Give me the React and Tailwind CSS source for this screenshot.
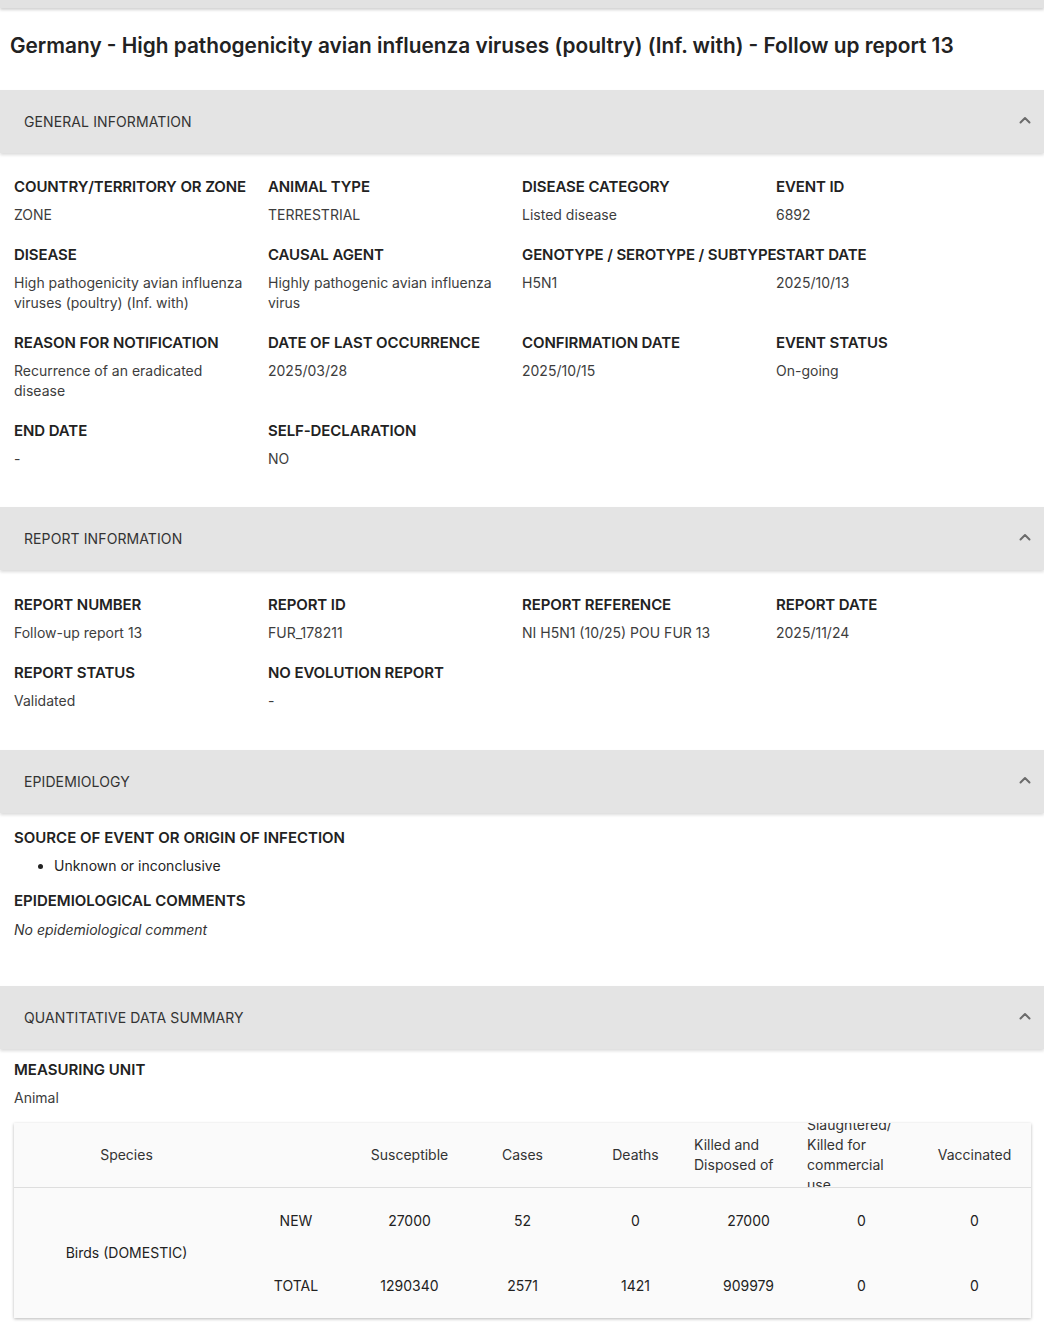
import React from "react";

const font = { fontFamily: "Inter, 'Noto Sans', 'Liberation Sans', sans-serif" };

function Chevron() {
  return (
    <svg width="12" height="8" viewBox="0 0 12 8" className="block">
      <path d="M1.5 6.5 L6 2 L10.5 6.5" fill="none" stroke="#6b6b6b" strokeWidth="2" strokeLinecap="round" strokeLinejoin="round" />
    </svg>
  );
}

function SectionHeader({ title }) {
  return (
    <div className="relative z-10 h-[63px] bg-[#e4e4e4] flex items-center justify-between pl-6 pr-[13px] shadow-[0_2px_3px_rgba(0,0,0,0.14)]">
      <span className="text-[14px] text-[#333] tracking-[0.1px]">{title}</span>
      <span className="-mt-[4px]"><Chevron /></span>
    </div>
  );
}

function Field({ label, value }) {
  return (
    <div className="min-w-0">
      <div className="text-[15px] leading-6 font-semibold text-[#222] whitespace-nowrap tracking-[-0.1px]">{label}</div>
      <div className="mt-[6px] text-[14px] leading-5 text-[#3d3d3d]">{value}</div>
    </div>
  );
}

function Grid({ items }) {
  return (
    <div className="grid grid-cols-[254px_254px_254px_254px] gap-y-[18px]">
      {items.map((it, i) => (
        <Field key={i} label={it[0]} value={it[1]} />
      ))}
    </div>
  );
}

const general = [
  ["COUNTRY/TERRITORY OR ZONE", "ZONE"],
  ["ANIMAL TYPE", "TERRESTRIAL"],
  ["DISEASE CATEGORY", "Listed disease"],
  ["EVENT ID", "6892"],
  ["DISEASE", <>High pathogenicity avian influenza<br />viruses (poultry) (Inf. with)</>],
  ["CAUSAL AGENT", <>Highly pathogenic avian influenza<br />virus</>],
  ["GENOTYPE / SEROTYPE / SUBTYPE", "H5N1"],
  ["START DATE", "2025/10/13"],
  ["REASON FOR NOTIFICATION", <>Recurrence of an eradicated<br />disease</>],
  ["DATE OF LAST OCCURRENCE", "2025/03/28"],
  ["CONFIRMATION DATE", "2025/10/15"],
  ["EVENT STATUS", "On-going"],
  ["END DATE", "-"],
  ["SELF-DECLARATION", "NO"],
];

const report = [
  ["REPORT NUMBER", "Follow-up report 13"],
  ["REPORT ID", "FUR_178211"],
  ["REPORT REFERENCE", "NI H5N1 (10/25) POU FUR 13"],
  ["REPORT DATE", "2025/11/24"],
  ["REPORT STATUS", "Validated"],
  ["NO EVOLUTION REPORT", "-"],
];

const headers = [
  "Susceptible",
  "Cases",
  "Deaths",
  <>Killed and<br />Disposed of</>,
  <>Slaughtered/<br />Killed for<br />commercial<br />use</>,
  "Vaccinated",
];
const rowNew = ["27000", "52", "0", "27000", "0", "0"];
const rowTotal = ["1290340", "2571", "1421", "909979", "0", "0"];

function Table() {
  return (
    <div className="bg-[#fafafa] shadow-[0_1px_3px_rgba(0,0,0,0.28)] grid grid-cols-[225px_114px_repeat(6,113px)] grid-rows-[65px_65px_65px] text-[14px] leading-5 text-[#333]">
      <div className="flex items-center justify-center border-b border-[#dedede]">Species</div>
      <div className="border-b border-[#dedede]"></div>
      {headers.map((h, i) => (
        <div key={i} className="flex items-center justify-center overflow-hidden border-b border-[#dedede] px-px">
          <span className={i === 3 || i === 4 ? "w-full pl-px" : ""}>{h}</span>
        </div>
      ))}
      <div className="row-span-2 flex items-center justify-center text-[#222]">Birds (DOMESTIC)</div>
      <div className="flex items-center justify-center text-[#222]">NEW</div>
      {rowNew.map((v, i) => (
        <div key={i} className="flex items-center justify-center text-[#222]">{v}</div>
      ))}
      <div className="flex items-center justify-center text-[#222]">TOTAL</div>
      {rowTotal.map((v, i) => (
        <div key={i} className="flex items-center justify-center text-[#222]">{v}</div>
      ))}
    </div>
  );
}

export default function App() {
  return (
    <div style={font} className="w-[1044px] bg-white min-h-[1326px]">
      <div className="relative z-10 h-2 bg-[#e2e2e2] shadow-[0_2px_3px_rgba(0,0,0,0.18)]"></div>
      <div className="h-[82px] pt-[23px] pl-[10px]">
        <h1 className="text-[20.8px] leading-[30px] font-semibold text-[#222] whitespace-nowrap">
          Germany - High pathogenicity avian influenza viruses (poultry) (Inf. with) - Follow up report 13
        </h1>
      </div>

      <SectionHeader title="GENERAL INFORMATION" />
      <div className="pl-[14px] pt-[22px] pb-[38px]">
        <Grid items={general} />
      </div>

      <SectionHeader title="REPORT INFORMATION" />
      <div className="pl-[14px] pt-[23px] pb-[39px]">
        <Grid items={report} />
      </div>

      <SectionHeader title="EPIDEMIOLOGY" />
      <div className="pl-[14px] pt-[13px] pb-[46px]">
        <div className="text-[15px] leading-6 font-semibold text-[#222]">SOURCE OF EVENT OR ORIGIN OF INFECTION</div>
        <ul className="mt-[6px] text-[14px] leading-5 text-[#222] list-disc pl-[40px]">
          <li>Unknown or inconclusive</li>
        </ul>
        <div className="mt-[13px] text-[15px] leading-6 font-semibold text-[#222]">EPIDEMIOLOGICAL COMMENTS</div>
        <div className="mt-[7px] text-[14px] leading-5 italic text-[#333]">No epidemiological comment</div>
      </div>

      <SectionHeader title="QUANTITATIVE DATA SUMMARY" />
      <div className="pl-[14px] pr-[13px] pt-[9px] pb-2">
        <div className="text-[15px] leading-6 font-semibold text-[#222]">MEASURING UNIT</div>
        <div className="mt-[6px] text-[14px] leading-5 text-[#3d3d3d]">Animal</div>
        <div className="mt-[15px]">
          <Table />
        </div>
      </div>
    </div>
  );
}
